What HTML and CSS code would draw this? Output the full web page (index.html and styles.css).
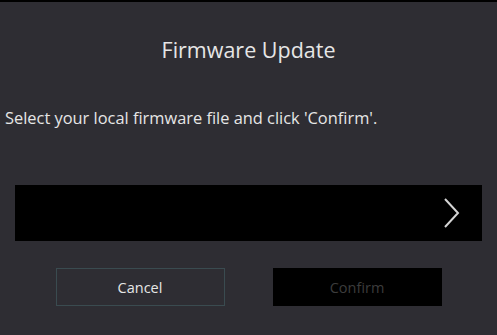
FILE: index.html
```html
<!DOCTYPE html>
<html lang="en">
  <head>
    <meta charset="UTF-8" />
    <meta name="viewport" content="width=device-width, initial-scale=1.0" />
    <title>Firmware Update</title>
    <link rel="stylesheet" href="styles.css">
  </head>
  <body>
    <div class="dialog">
      <h1 class="dialog-title">Firmware Update</h1>
      <p class="dialog-text">Select your local firmware file and click 'Confirm'.</p>

      <div class="file-picker">
        <svg class="chevron" width="16" height="30" viewBox="0 0 16 30">
          <path d="M1 1 L14 15 L1 29" fill="none" stroke="#d4d4d4" stroke-width="2" />
        </svg>
      </div>

      <div class="actions">
        <button class="btn btn-cancel">Cancel</button>
        <button class="btn btn-confirm" disabled>Confirm</button>
      </div>
    </div>
  </body>
</html>
```

FILE: styles.css
```css
:root {
  --background-color: #2e2d33;
  --text-color: #e6e6e6;
  --muted-color: #3c3c3c;
}

* {
  margin: 0;
  padding: 0;
  box-sizing: border-box;
}

body {
  font-family: "Open Sans", "Noto Sans", sans-serif;
  background-color: var(--background-color);
  color: var(--text-color);
  border-top: 2px solid #000;
  height: 335px;
  overflow: hidden;
}

.dialog {
  display: flex;
  flex-direction: column;
}

.dialog-title {
  font-weight: 400;
  font-size: 21.5px;
  text-align: center;
  margin-top: 35px;
  line-height: 26px;
}

.dialog-text {
  font-size: 16.4px;
  line-height: 20px;
  margin-top: 45px;
  padding-left: 5px;
  white-space: nowrap;
}

.file-picker {
  margin: 57px 15px 0;
  height: 56px;
  background: #000;
  display: flex;
  align-items: center;
  justify-content: flex-end;
  padding-right: 22px;
}

.actions {
  display: flex;
  justify-content: center;
  gap: 48px;
  margin-top: 27px;
}

.btn {
  width: 169px;
  height: 38px;
  font-family: inherit;
  font-size: 14.5px;
  background: transparent;
  border: 1px solid #3a4b50;
  color: var(--text-color);
}

.btn-confirm {
  background: #000;
  border-color: #000;
  color: var(--muted-color);
}
```
